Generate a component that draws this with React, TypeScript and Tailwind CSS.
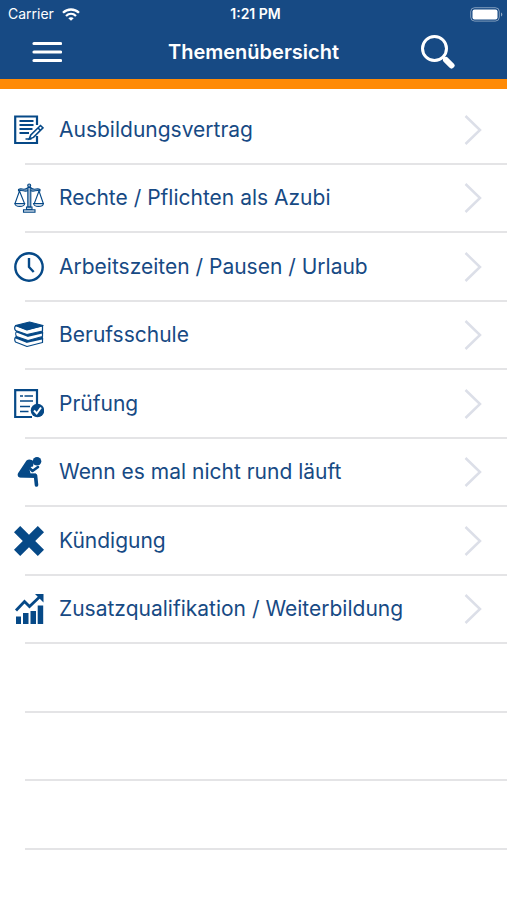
import type { ReactNode } from "react";

interface Topic {
  title: string;
  icon: ReactNode;
}

const ContractIcon = () => (
  <svg viewBox="0 0 30 30" className="size-[30px]" fill="none" stroke="currentColor">
    <path d="M23 10V1.500H1.200V28H23v-7" strokeWidth="2.200" />
    <path d="M5.500 6h14M5.500 10h14M5.500 14h13M5.500 18h9.500" strokeWidth="1.900" />
    <path d="M26.500 10.500l2.500 2.300-9.500 9.600-4.300 1.600 1.600-4.100z" fill="white" strokeWidth="1.600" />
    <path d="M24 13l2.500 2.400M11.500 24h6" strokeWidth="1.600" />
  </svg>
);

const ScalesIcon = () => (
  <svg viewBox="0 0 30 30" className="size-[30px]" fill="none" stroke="currentColor" strokeWidth="1.1">
    <path d="M13.800 24V4.500h3V24z" fill="currentColor" fillOpacity="0.4" />
    <circle cx="15.2" cy="2.5" r="1.500" fill="currentColor" fillOpacity="0.4" />
    <path d="M13.5 5C10 8 7.500 4.500 4.500 6.500v1.300c4-1.500 6 1.700 9.500-.3M17 5c3.500 3 6-.5 9 1.500v1.300c-4-1.500-6 1.700-9.500-.3" fill="currentColor" fillOpacity="0.4" />
    <path d="M5.500 8L1 20.500M5.500 8l5 12.500M25 8l-4.700 12.500M25 8l4.300 12.500" />
    <path d="M.8 20.500h10c-.7 4-9.300 4-10 0zM19.500 20.500h10c-.7 4-9.300 4-10 0z" fill="currentColor" fillOpacity="0.25" />
    <path d="M12.500 24h5.500v2.500h-5.500zM9.500 26.800h11.500v2.500H9.500z" fill="currentColor" fillOpacity="0.25" />
  </svg>
);

const ClockIcon = () => (
  <svg viewBox="0 0 30 30" className="size-[30px]" fill="none" stroke="currentColor" strokeWidth="2.400">
    <circle cx="15" cy="15" r="13.700" />
    <path d="M15 6v9l4.700 5" strokeLinejoin="round" />
  </svg>
);

const BooksIcon = () => (
  <svg viewBox="0 0 30 30" className="size-[30px]" fill="none" stroke="currentColor" strokeWidth="1.200" strokeLinejoin="round">
    <path d="M2 17l11 4.500L28.500 18v4.500L13 26.500 1.500 22C.3 20 .6 17.500 2 17z" fill="white" />
    <path d="M1.500 17l11.500 4.500 16-3.500" strokeWidth="2.800" />
    <path d="M3 11l11 4 14.500-3v4.500L14 20.500 2.500 16.500C1.300 14.500 1.600 12 3 11z" fill="white" />
    <path d="M2.500 11l11.500 4.500 15-3.500" strokeWidth="2.800" />
    <path d="M2 5.500l11 4L28.500 6v5L13 14.500 1.500 10.500C.3 8.500.6 6.500 2 5.500z" fill="white" />
    <path d="M1.500 5.500L15.500 2l13.500 3.500-16 4.500z" fill="currentColor" />
  </svg>
);

const ExamIcon = () => (
  <svg viewBox="0 0 30 30" className="size-[30px]" fill="none" stroke="currentColor">
    <path d="M23 15V1.200H1.200V28H18" strokeWidth="2.200" />
    <path d="M6 7h3M10.500 7h8.500M6 12h13M6 17.500h10M6 22.500h8.500" strokeWidth="1.600" />
    <circle cx="23.500" cy="21.500" r="6.800" fill="currentColor" stroke="none" />
    <path d="M20 21.500l2.700 3 4.300-6" stroke="white" strokeWidth="2" />
  </svg>
);

const ThinkerIcon = () => (
  <svg viewBox="0 0 30 30" className="size-[30px]" fill="none" stroke="currentColor" strokeLinecap="round" strokeLinejoin="round">
    <circle cx="23" cy="4.300" r="4.300" fill="currentColor" stroke="none" />
    <path d="M12.500 3.500C15 1.500 17.500 2.500 20 4.500l-1 5-2.500.5-1 2.500 1 4H22l1 4.500L6 20.500c-2.500-.5-3-3-1.500-5z" fill="currentColor" stroke="none" />
    <path d="M6 18.500h15.500l1 9.500" strokeWidth="3.600" />
    <path d="M14.500 10l4 4 5.500-4" strokeWidth="2.600" />
  </svg>
);

const CrossIcon = () => (
  <svg viewBox="0 0 30 30" className="size-[30px]" fill="currentColor">
    <path d="M6.200 0L15 8.800 23.800 0 30 6.200 21.200 15 30 23.800 23.800 30 15 21.200 6.200 30 0 23.800 8.800 15 0 6.200z" />
  </svg>
);

const GrowthIcon = () => (
  <svg viewBox="0 0 30 30" className="size-[30px]" fill="currentColor">
    <path d="M2 22.500h5V30H2zM9 19h5.500v11H9zM16.500 17H22v13h-5.500zM23.700 11.500h5.500V30h-5.500z" />
    <path d="M2 16.500L10.500 7.500l5 5L25.500 3" fill="none" stroke="currentColor" strokeWidth="2.800" />
    <path d="M21 0h8.500v8.500z" />
  </svg>
);

const Chevron = () => (
  <svg viewBox="0 0 18 32" className="h-8 w-[18px] shrink-0 text-[#dcdfe8]" fill="none" stroke="currentColor" strokeWidth="2.500">
    <path d="M1.500 2l14.500 14-14.500 14" />
  </svg>
);

const topics: Topic[] = [
  { title: "Ausbildungsvertrag", icon: <ContractIcon /> },
  { title: "Rechte / Pflichten als Azubi", icon: <ScalesIcon /> },
  { title: "Arbeitszeiten / Pausen / Urlaub", icon: <ClockIcon /> },
  { title: "Berufsschule", icon: <BooksIcon /> },
  { title: "Prüfung", icon: <ExamIcon /> },
  { title: "Wenn es mal nicht rund läuft", icon: <ThinkerIcon /> },
  { title: "Kündigung", icon: <CrossIcon /> },
  { title: "Zusatzqualifikation / Weiterbildung", icon: <GrowthIcon /> },
];

const emptyRows = [0, 1, 2];

function StatusBar() {
  return (
    <div className="grid h-7 grid-cols-3 items-center pr-1 pl-2 text-sm">
      <div className="flex items-center gap-2">
        <span>Carrier</span>
        <svg viewBox="0 0 18 13" className="h-[13px] w-[18px]" fill="none" stroke="currentColor" strokeWidth="2.300">
          <path d="M1 4.800c4.500-4.400 11.500-4.400 16 0M4 8c3-2.800 7-2.800 10 0" />
          <path d="M9 12.800L6.300 10.200c1.500-1.400 3.900-1.400 5.400 0z" fill="currentColor" stroke="none" />
        </svg>
      </div>
      <span className="text-center font-semibold">1:21 PM</span>
      <svg viewBox="0 0 33 15" className="h-[15px] w-[33px] justify-self-end" fill="currentColor">
        <rect x="0.700" y="0.700" width="28.600" height="13.400" rx="4" fill="none" stroke="currentColor" strokeOpacity="0.450" />
        <rect x="2.500" y="2.500" width="25" height="10" rx="2" />
        <path d="M31 5.500c1.800.8 1.800 3.200 0 4z" fillOpacity="0.500" />
      </svg>
    </div>
  );
}

export default function App() {
  return (
    <div className="min-h-screen bg-white font-[Inter,'Liberation_Sans',sans-serif] text-[#174a84]">
      <header className="border-b-10 border-[#ff8a05] bg-[#174a84] text-white">
        <StatusBar />
        <div className="grid h-[51px] grid-cols-[80px_1fr_80px] items-center pb-[3px]">
          <button type="button" aria-label="Menü" className="justify-self-end pr-[18px]">
            <svg viewBox="0 0 30 22" className="h-[22px] w-[30px]" stroke="currentColor" strokeWidth="3.200" strokeLinecap="round">
              <path d="M2 2.500h26.500M2 11h26.500M2 19.500h26.500" />
            </svg>
          </button>
          <h1 className="text-center text-xl font-semibold">Themenübersicht</h1>
          <button type="button" aria-label="Suchen" className="-ml-2">
            <svg viewBox="0 0 36 36" className="size-9" fill="none" stroke="currentColor">
              <circle cx="15.500" cy="14.500" r="12" strokeWidth="3" />
              <path d="M23.500 22.500l3 3" strokeWidth="2.500" />
              <path d="M27 26l5.500 5.500" strokeWidth="6" strokeLinecap="round" />
            </svg>
          </button>
        </div>
      </header>

      <ul className="pt-[7px]">
        {topics.map((topic) => (
          <li key={topic.title} className="flex flex-col odd:h-[69px] even:h-[68px]">
            <button type="button" className="flex grow items-center gap-[15px] pr-[25px] pl-3.5 text-left">
              <span className="shrink-0 text-[#064987]">{topic.icon}</span>
              <span className="grow text-[21px] leading-7">{topic.title}</span>
              <Chevron />
            </button>
            <div className="ml-[25px] h-0.5 bg-[#e4e4e6]" />
          </li>
        ))}
        {emptyRows.map((row) => (
          <li key={row} aria-hidden="true" className="flex flex-col justify-end odd:h-[69px] even:h-[68px]">
            <div className="ml-[25px] h-0.5 bg-[#e4e4e6]" />
          </li>
        ))}
      </ul>
    </div>
  );
}
